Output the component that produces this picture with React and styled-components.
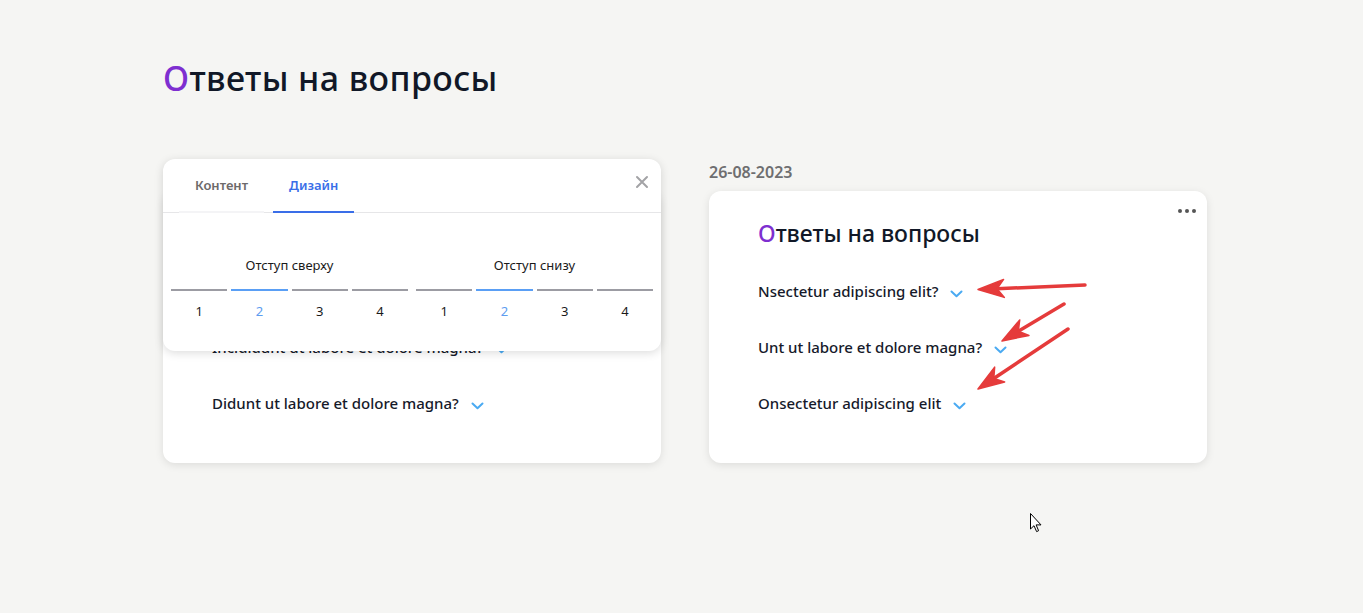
import React from "react";
import styled, { createGlobalStyle } from "styled-components";

const Global = createGlobalStyle`
  html, body { margin: 0; padding: 0; background: #f5f5f3; }
  body { font-family: "Noto Sans", "Open Sans", sans-serif; color: #161a2a; }
  * { box-sizing: border-box; }
`;

const Page = styled.div`
  position: relative;
  width: 1363px;
  height: 613px;
  padding: 58px 0 0 163px;
  overflow: hidden;
`;

const Title = styled.h1`
  margin: 0;
  font-size: 34px;
  line-height: 40px;
  font-weight: 500;
  color: #111827;
  letter-spacing: 0.4px;
`;

const Accent = styled.span`
  color: #7e2fd0;
`;

const Row = styled.div`
  display: flex;
  gap: 48px;
  margin-top: 61px;
`;

const Column = styled.div`
  position: relative;
  width: 498px;
`;

const DateLabel = styled.div`
  height: 22px;
  font-size: 16px;
  line-height: 26px;
  font-weight: 600;
  color: #6e6e70;
  margin-bottom: 10px;
`;

const Card = styled.div`
  position: relative;
  background: #fff;
  border-radius: 12px;
  box-shadow: 0 2px 8px rgba(0, 0, 0, 0.1);
  padding: 27px 48px 48px 49px;
  display: flex;
  flex-direction: column;
  gap: 32px;
`;

const CardTitle = styled.h2`
  margin: 0;
  font-size: 23px;
  line-height: 30px;
  font-weight: 500;
  color: #111827;
`;

const Questions = styled.div`
  display: flex;
  flex-direction: column;
  gap: 33px;
`;

const Question = styled.div`
  display: flex;
  align-items: center;
  gap: 12px;
  font-size: 15px;
  line-height: 23px;
  font-weight: 500;
  color: #161a2a;
`;

const Chevron = styled.svg`
  width: 13px;
  height: 8px;
  margin-top: 4px;
  flex: none;
`;

const Dots = styled.svg`
  position: absolute;
  top: 17px;
  right: 10px;
  width: 20px;
  height: 6px;
`;

const Popover = styled.div`
  position: absolute;
  top: 0;
  left: 0;
  right: 0;
  z-index: 2;
  background: #fff;
  border-radius: 12px;
  box-shadow: 0 2px 10px rgba(0, 0, 0, 0.14);
`;

const Tabs = styled.div`
  display: flex;
  gap: 9px;
  padding: 0 16px;
  border-bottom: 1px solid #e6e6e8;
`;

const Tab = styled.div`
  padding: 16px 16px 16px;
  font-size: 13px;
  line-height: 20px;
  font-weight: 600;
  color: ${(p) => (p.$active ? "#3a6ee8" : "#6d6a6a")};
  border-bottom: 2px solid ${(p) => (p.$active ? "#3a6ee8" : "#f4f4f6")};
  margin-bottom: -1px;
`;

const Close = styled.svg`
  position: absolute;
  top: 16px;
  right: 12px;
  width: 14px;
  height: 14px;
`;

const Settings = styled.div`
  display: flex;
  gap: 8px;
  padding: 43px 8px 31px;
`;

const Group = styled.div`
  flex: 1;
  display: flex;
  flex-direction: column;
  align-items: stretch;
`;

const GroupLabel = styled.div`
  text-align: center;
  font-size: 13px;
  line-height: 18px;
  color: #1a1a1a;
  margin-bottom: 15px;
`;

const Segments = styled.div`
  display: grid;
  grid-template-columns: repeat(4, 1fr);
  gap: 4px;
`;

const Segment = styled.div`
  border-top: 2px solid ${(p) => (p.$active ? "#5a9ff5" : "#9c9ca3")};
  padding-top: 11px;
  text-align: center;
  font-size: 13px;
  line-height: 18px;
  color: ${(p) => (p.$active ? "#5e9cf0" : "#1a1a1a")};
`;

const Overlay = styled.svg`
  position: absolute;
  left: 0;
  top: 0;
  width: 1363px;
  height: 613px;
  pointer-events: none;
  z-index: 5;
`;

const ChevronIcon = () => (
  <Chevron viewBox="0 0 13 8">
    <path d="M1.5 1.5 L6.5 6.2 L11.5 1.5" fill="none" stroke="#4aaaf2" strokeWidth="2" strokeLinecap="round" strokeLinejoin="round" />
  </Chevron>
);

const CardContent = ({ questions }) => (
  <>
    <Dots viewBox="0 0 20 6">
      <circle cx="3" cy="3" r="2" fill="#555" />
      <circle cx="10" cy="3" r="2" fill="#555" />
      <circle cx="17" cy="3" r="2" fill="#555" />
    </Dots>
    <CardTitle>
      <Accent>О</Accent>тветы на вопросы
    </CardTitle>
    <Questions>
      {questions.map((q) => (
        <Question key={q}>
          {q}
          <ChevronIcon />
        </Question>
      ))}
    </Questions>
  </>
);

function arrow(tail, tip) {
  const [x1, y1] = tail;
  const [x2, y2] = tip;
  const dx = x2 - x1;
  const dy = y2 - y1;
  const len = Math.hypot(dx, dy);
  const ux = dx / len;
  const uy = dy / len;
  const px = -uy;
  const py = ux;
  const hl = 26;
  const hw = 9;
  const bx = x2 - ux * hl;
  const by = y2 - uy * hl;
  const nx = x2 - ux * (hl - 7);
  const ny = y2 - uy * (hl - 7);
  const head = `${x2},${y2} ${bx + px * hw},${by + py * hw} ${nx},${ny} ${bx - px * hw},${by - py * hw}`;
  return { line: [x1, y1, nx, ny], head };
}

const arrows = [
  arrow([1085, 285], [978, 289.5]),
  arrow([1064, 304], [1002, 341]),
  arrow([1068, 329], [978, 389]),
];

const Segs = ({ label }) => (
  <Group>
    <GroupLabel>{label}</GroupLabel>
    <Segments>
      {[1, 2, 3, 4].map((n) => (
        <Segment key={n} $active={n === 2}>
          {n}
        </Segment>
      ))}
    </Segments>
  </Group>
);

export default function App() {
  return (
    <Page>
      <Global />
      <Title>
        <Accent>О</Accent>тветы на вопросы
      </Title>
      <Row>
        <Column>
          <DateLabel />
          <Card>
            <CardContent
              questions={[
                "Lorem ipsum dolor sit amet?",
                "Incididunt ut labore et dolore magna?",
                "Didunt ut labore et dolore magna?",
              ]}
            />
          </Card>
          <Popover>
            <Tabs>
              <Tab>Контент</Tab>
              <Tab $active>Дизайн</Tab>
            </Tabs>
            <Close viewBox="0 0 14 14">
              <path d="M2 2 L12 12 M12 2 L2 12" stroke="#a3a3a6" strokeWidth="2" strokeLinecap="round" />
            </Close>
            <Settings>
              <Segs label="Отступ сверху" />
              <Segs label="Отступ снизу" />
            </Settings>
          </Popover>
        </Column>
        <Column>
          <DateLabel>26-08-2023</DateLabel>
          <Card>
            <CardContent
              questions={[
                "Nsectetur adipiscing elit?",
                "Unt ut labore et dolore magna?",
                "Onsectetur adipiscing elit",
              ]}
            />
          </Card>
        </Column>
      </Row>
      <Overlay viewBox="0 0 1363 613">
        {arrows.map((a, i) => (
          <g key={i}>
            <line x1={a.line[0]} y1={a.line[1]} x2={a.line[2]} y2={a.line[3]} stroke="#e53b3b" strokeWidth="3.5" strokeLinecap="round" />
            <polygon points={a.head} fill="#e53b3b" stroke="#e53b3b" strokeWidth="1.5" strokeLinejoin="round" />
          </g>
        ))}
        <path
          d="M1030.5 513.5 L1030.5 529 L1034 525.7 L1036.6 531.6 L1038.6 530.7 L1036.1 524.9 L1041 524.9 Z"
          fill="#fff"
          stroke="#000"
          strokeWidth="1"
          strokeLinejoin="round"
        />
      </Overlay>
    </Page>
  );
}
